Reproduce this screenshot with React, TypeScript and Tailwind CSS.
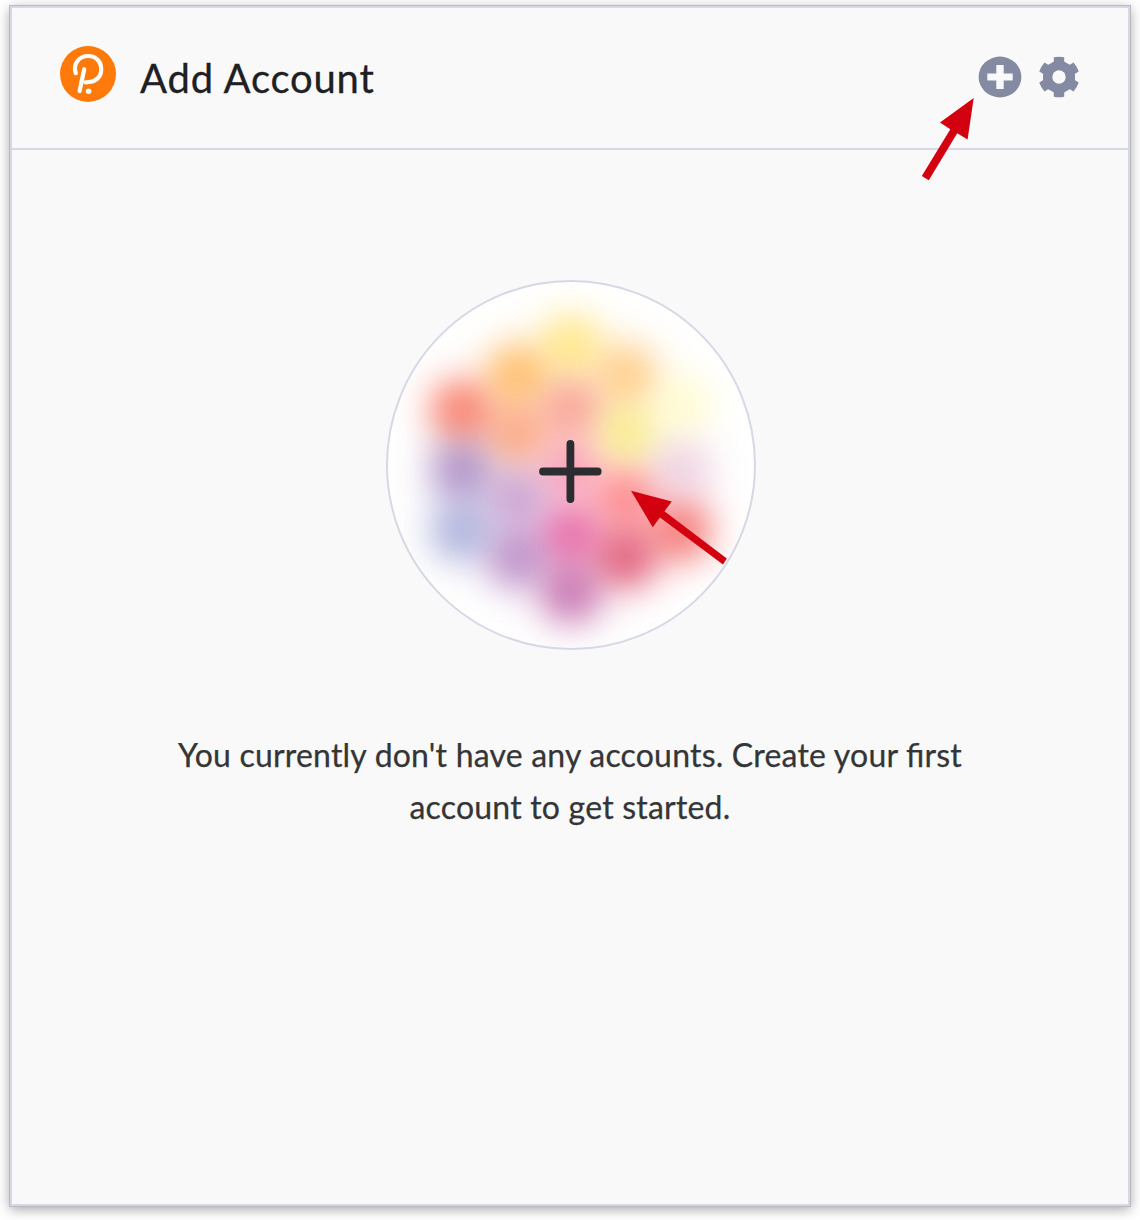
const dots: [number, number, string][] = [
  [571, 345, '#ffe374'],
  [517, 374, '#ffb351'],
  [626, 374, '#ffc676'],
  [461, 410, '#f76a54'],
  [571, 408, '#f79484'],
  [681, 405, '#fffbca'],
  [517, 434, '#fb9a70'],
  [626, 434, '#f8ea7c'],
  [461, 470, '#a080be'],
  [571, 470, '#f98eaa'],
  [681, 470, '#ecccde'],
  [517, 498, '#c294cc'],
  [626, 498, '#ff7478'],
  [461, 531, '#a0a6d6'],
  [571, 534, '#e4549a'],
  [681, 531, '#f4625f'],
  [517, 558, '#b27ec0'],
  [626, 558, '#dc4464'],
  [571, 593, '#be5ea4'],
];

function Logo() {
  return (
    <svg width="56" height="56" viewBox="60 46 56 56" className="block shrink-0">
      <circle cx="88" cy="74" r="28" fill="#ff7a0a" />
      <g fill="none" stroke="#fff" strokeWidth="4.2" strokeLinecap="round">
        <path d="M75.8 73.2C72.5 63.5 79.5 56 88.3 56C96 56 101.2 61.5 101.2 69.2C101.2 77.5 95.5 82.5 85.3 82.3" />
        <path d="M84.2 69.2L79.6 91" />
      </g>
      <circle cx="88.6" cy="91.2" r="2.8" fill="#fff" />
    </svg>
  );
}

function AddIcon() {
  return (
    <svg width="44" height="42" viewBox="978 56 44 42" className="block">
      <ellipse cx="1000" cy="77" rx="21.4" ry="20.4" fill="#858aa3" />
      <path d="M996.3 65h7.4v8.6h9v6.9h-9v8.5h-7.4v-8.5h-9v-6.9h9z" fill="#f9f9f9" />
    </svg>
  );
}

function GearIcon() {
  return (
    <svg width="42" height="42" viewBox="-21 -21 42 42" className="block">
      <g fill="#858aa3">
        <circle r="16" />
        {[0, 60, 120, 180, 240, 300].map((a) => (
          <path key={a} d="M-5.2 -19.8Q0 -20.8 5.2 -19.8L5.2 -15.5L8 -13L0 -8L-8 -13L-5.2 -15.5Z" transform={`rotate(${a})`} />
        ))}
      </g>
      <circle r="6.7" fill="#f9f9f9" />
    </svg>
  );
}

function Dots({ r }: { r: number }) {
  return (
    <>
      {dots.map(([x, y, color]) => (
        <circle key={`${x}-${y}`} cx={x} cy={y} r={r} fill={color} />
      ))}
    </>
  );
}

export default function App() {
  return (
    <div className="h-[1220px] w-[1140px] bg-white pl-[10px] pt-[6px] font-['Lato',sans-serif]">
      <main className="relative h-[1200px] w-[1120px] border-2 border-[#d6d8e6] bg-[#f9f9f9] shadow-[0_0_0_1px_#b9b9be,0_3px_12px_rgba(0,0,0,0.38)]">
        <header className="flex h-[142px] items-start border-b-2 border-[#d6d8e6] pl-12 pr-12 pt-[38px]">
          <Logo />
          <h1 className="ml-[24px] mt-[4px] whitespace-nowrap text-[40px] leading-[56px] tracking-[0.8px] text-[#1e2024] [-webkit-text-stroke:0.3px_#1e2024]">
            Add Account
          </h1>
          <div className="ml-auto mt-[10px] flex gap-4">
            <button aria-label="Add account"><AddIcon /></button>
            <button aria-label="Settings"><GearIcon /></button>
          </div>
        </header>
        <section className="flex flex-col items-center pt-[130px]">
          <button
            aria-label="Create account"
            className="ml-[2px] h-[370px] w-[370px] overflow-hidden rounded-full border-2 border-[#d6d8e6] bg-white"
          >
            <svg width="366" height="366" viewBox="388 282 366 366" className="block">
              <defs>
                <filter id="soft" x="-20%" y="-20%" width="140%" height="140%" colorInterpolationFilters="sRGB">
                  <feGaussianBlur stdDeviation="15" />
                </filter>
                <filter id="haze" x="-30%" y="-30%" width="160%" height="160%" colorInterpolationFilters="sRGB">
                  <feGaussianBlur stdDeviation="22" />
                </filter>
              </defs>
              <g filter="url(#haze)" opacity="0.58"><Dots r={30} /></g>
              <g filter="url(#soft)" opacity="0.64"><Dots r={25} /></g>
              <path d="M543 471.5H597.7M570.4 444V499" stroke="#2b2d31" strokeWidth="7.8" strokeLinecap="round" />
            </svg>
          </button>
          <p className="mt-[79px] flex flex-col items-center whitespace-nowrap text-[32px] leading-[52px] tracking-[0.2px] text-[#343536] [-webkit-text-stroke:0.25px_#343536] [font-feature-settings:'liga'_1]">
            <span>You currently don't have any accounts. Create your first</span>
            <span>account to get started.</span>
          </p>
        </section>
        <svg width="1140" height="1220" viewBox="0 0 1140 1220" className="pointer-events-none absolute -left-[12px] -top-[8px] max-w-none" fill="#d3000f">
          <path d="M973.7 98L940 122.5L950.3 129.2L921.8 176L928.8 180.3L957.2 133.2L967.6 139.5Z" />
          <path d="M631 490.8L671.8 501.4L664.4 511.3L726.8 558.4L723 564.5L660 517.5L652.7 527.2Z" />
        </svg>
      </main>
    </div>
  );
}
